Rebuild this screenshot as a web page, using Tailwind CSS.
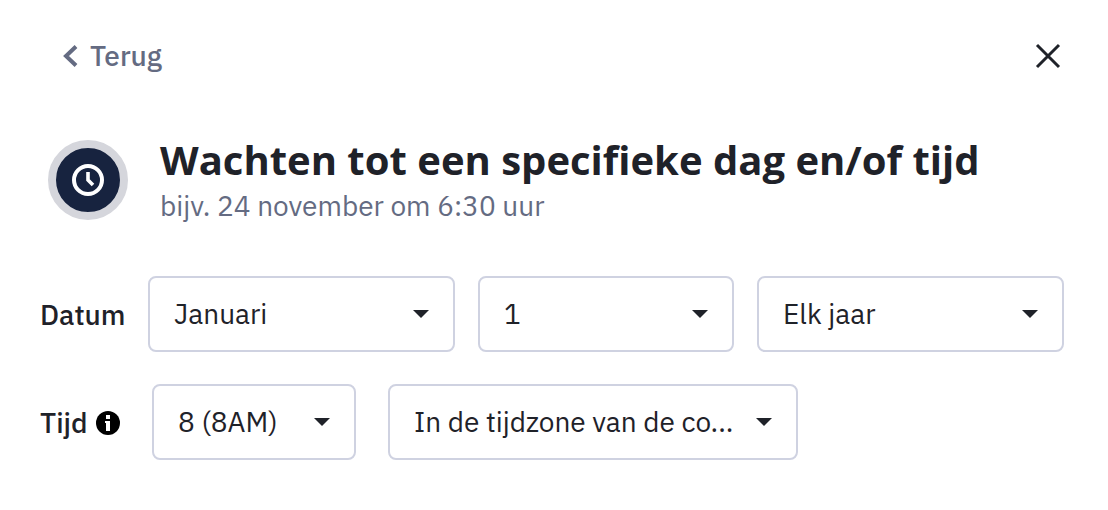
<!DOCTYPE html>
<html lang="nl">
<head>
    <meta charset="UTF-8">
    <meta name="viewport" content="width=device-width, initial-scale=1.0">
    <title>Wachten tot een specifieke dag en/of tijd</title>
    <script src="https://cdn.jsdelivr.net/npm/@tailwindcss/browser@4"></script>
</head>
<body class="bg-white font-['IBM_Plex_Sans',Roboto,sans-serif] text-[28px] leading-9 text-[#1f2229]">
    <main class="px-10 pt-8">
        <!-- Top bar -->
        <div class="flex items-center justify-between pl-5 pr-1">
            <button type="button" class="flex h-12 items-center gap-2.5 font-medium text-[#646b82]">
                <svg class="h-6 w-5" viewBox="0 0 20 24" fill="none" stroke="currentColor" stroke-width="4" aria-hidden="true">
                    <path d="M16 2.5 6 12l10 9.5" />
                </svg>
                Terug
            </button>
            <button type="button" aria-label="Sluiten" class="p-2 -mr-2">
                <svg class="size-8" viewBox="0 0 32 32" fill="none" stroke="currentColor" stroke-width="3" aria-hidden="true">
                    <path d="M5 5l22 22M27 5 5 27" />
                </svg>
            </button>
        </div>

        <header class="mt-14 flex items-center gap-8 pl-2">
            <div class="flex size-20 flex-none items-center justify-center rounded-full border-8 border-[#d5d6dc] bg-[#17233f]">
                <svg class="size-8" viewBox="0 0 32 32" fill="none" stroke="#fff" stroke-width="4" aria-hidden="true">
                    <circle cx="16" cy="16" r="14" />
                    <path d="M16 8v8l5 5" stroke-width="3.6" />
                </svg>
            </div>
            <div class="flex flex-col gap-1">
                <h1 class="font-['Open_Sans',sans-serif] text-[40px] leading-12 font-bold">Wachten tot een specifieke dag en/of tijd</h1>
                <p class="text-[#646b82]">bijv. 24 november om 6:30 uur</p>
            </div>
        </header>

        <form class="mt-13 flex flex-col gap-8">
            <!-- Date -->
            <div class="flex items-center pr-1">
                <label for="month" class="w-27 flex-none pt-0.5 font-medium">Datum</label>
                <div class="grid flex-1 grid-cols-[6fr_5fr_6fr] gap-[23px]">
                    <div class="relative">
                        <select id="month" class="h-19 w-full appearance-none rounded-lg border-2 border-[#cfd2e1] bg-white pl-6 pr-14">
                            <option>Januari</option>
                        </select>
                        <svg class="pointer-events-none absolute top-8 right-6 h-3 w-5" viewBox="0 0 20 12" fill="currentColor" aria-hidden="true"><path d="M2 2h16l-8 8z" /></svg>
                    </div>
                    <div class="relative">
                        <select aria-label="Dag" class="h-19 w-full appearance-none rounded-lg border-2 border-[#cfd2e1] bg-white pl-6 pr-14">
                            <option>1</option>
                        </select>
                        <svg class="pointer-events-none absolute top-8 right-6 h-3 w-5" viewBox="0 0 20 12" fill="currentColor" aria-hidden="true"><path d="M2 2h16l-8 8z" /></svg>
                    </div>
                    <div class="relative">
                        <select aria-label="Jaar" class="h-19 w-full appearance-none rounded-lg border-2 border-[#cfd2e1] bg-white pl-6 pr-14">
                            <option>Elk jaar</option>
                        </select>
                        <svg class="pointer-events-none absolute top-8 right-6 h-3 w-5" viewBox="0 0 20 12" fill="currentColor" aria-hidden="true"><path d="M2 2h16l-8 8z" /></svg>
                    </div>
                </div>
            </div>

            <!-- Time -->
            <div class="flex items-center gap-8">
                <div class="flex w-20 flex-none items-center justify-between pt-0.5">
                    <label for="hour" class="font-medium">Tijd</label>
                    <svg class="size-6" viewBox="0 0 24 24" aria-hidden="true">
                        <circle cx="12" cy="12" r="12" fill="#000" />
                        <path fill="#fff" d="M10 4h4v4h-4zM9 10h5v10h-4v-8H9z" />
                    </svg>
                </div>
                <div class="relative w-51 flex-none">
                    <select id="hour" class="h-19 w-full appearance-none rounded-lg border-2 border-[#cfd2e1] bg-white pl-6 pr-14">
                        <option>8 (8AM)</option>
                    </select>
                    <svg class="pointer-events-none absolute top-8 right-6 h-3 w-5" viewBox="0 0 20 12" fill="currentColor" aria-hidden="true"><path d="M2 2h16l-8 8z" /></svg>
                </div>
                <div class="relative max-w-[410px] flex-1">
                    <select aria-label="Tijdzone" class="h-19 w-full appearance-none rounded-lg border-2 border-[#cfd2e1] bg-white pl-6 pr-14">
                        <option>In de tijdzone van de co...</option>
                    </select>
                    <svg class="pointer-events-none absolute top-8 right-6 h-3 w-5" viewBox="0 0 20 12" fill="currentColor" aria-hidden="true"><path d="M2 2h16l-8 8z" /></svg>
                </div>
            </div>
        </form>
    </main>
</body>
</html>
